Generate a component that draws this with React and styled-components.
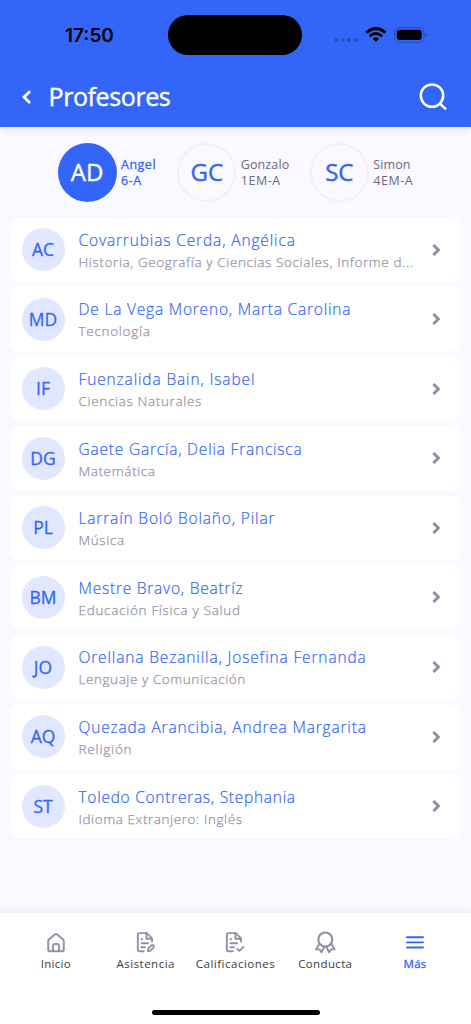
import React from "react";
import styled, { createGlobalStyle } from "styled-components";

const GlobalStyle = createGlobalStyle`
  * {
    box-sizing: border-box;
  }

  body {
    margin: 0;
    background: #faf9ff;
    font-family: "Open Sans", "Noto Sans", sans-serif;
  }
`;

const Screen = styled.div`
  display: flex;
  flex-direction: column;
  width: 471px;
  height: 1024px;
  overflow: hidden;
  background: #faf9ff;
`;

const Header = styled.header`
  flex: none;
  height: 126.5px;
  background: #3366f8;
  box-shadow: 0 2px 8px rgba(60, 50, 110, 0.12);
`;

const StatusBar = styled.div`
  display: flex;
  align-items: center;
  height: 70px;
  padding: 0 42px 0 65px;
`;

const Time = styled.div`
  width: 103px;
  padding-top: 2px;
  font: 600 19px/24px "Inter", sans-serif;
  color: #000;
`;

const Island = styled.div`
  width: 135px;
  height: 40px;
  border-radius: 20px;
  background: #000;
`;

const StatusIcons = styled.svg`
  display: block;
  margin-left: 31px;
`;

const TitleBar = styled.div`
  display: flex;
  align-items: center;
  height: 54px;
  padding: 0 23px 0 21px;
`;

const Title = styled.h1`
  flex: 1;
  margin: -2px 0 0 15.5px;
  font-size: 25px;
  font-weight: 400;
  line-height: 34px;
  letter-spacing: -0.4px;
  -webkit-text-stroke: 0.4px #fff;
  color: #fff;
`;

const Students = styled.div`
  display: flex;
  flex: none;
  height: 91px;
  padding: 15.5px 0 0 57.5px;
`;

const Student = styled.div`
  display: flex;
  align-items: center;
  width: ${({ $width }) => $width}px;
  height: 60px;
`;

const StudentAvatar = styled.div`
  display: flex;
  flex: none;
  align-items: center;
  justify-content: center;
  width: 59px;
  height: 59px;
  padding-bottom: 2px;
  border: 2px solid ${({ $active }) => ($active ? "#3366f8" : "#f1f0f5")};
  border-radius: 50%;
  background: ${({ $active }) => ($active ? "#3366f8" : "transparent")};
  color: ${({ $active }) => ($active ? "#fff" : "#3366f8")};
  font-size: 24px;
  -webkit-text-stroke: 0.4px currentColor;
`;

const StudentInfo = styled.div`
  margin: 2px 0 0 4.5px;
  font-size: 12.5px;
  line-height: 16px;
  letter-spacing: ${({ $active }) => ($active ? 0.5 : 0.1)}px;
  -webkit-text-stroke: ${({ $active }) => ($active ? 0.3 : 0)}px currentColor;
  color: ${({ $active }) => ($active ? "#3366f8" : "#6c6980")};
`;

const Grade = styled.div`
  letter-spacing: 0.5px;
`;

const List = styled.ul`
  display: flex;
  flex: 1;
  flex-direction: column;
  gap: 5.6px;
  margin: 0;
  padding: 0 11px;
  list-style: none;
`;

const Card = styled.li`
  display: flex;
  flex: none;
  align-items: center;
  height: 64px;
  padding: 0 19px 0 10.5px;
  border-radius: 8px;
  background: #fff;
`;

const Avatar = styled.div`
  display: flex;
  flex: none;
  align-items: center;
  justify-content: center;
  width: 43px;
  height: 43px;
  padding-bottom: 1px;
  border-radius: 50%;
  background: #e1e7ff;
  color: #3366f8;
  font-size: 17.5px;
  -webkit-text-stroke: 0.3px currentColor;
`;

const Info = styled.div`
  width: 340px;
  margin-left: 14px;
  padding-top: 2.6px;
  white-space: nowrap;
`;

const Name = styled.div`
  font-size: 15.5px;
  font-weight: 300;
  line-height: 22px;
  letter-spacing: ${({ $ls }) => $ls}px;
  -webkit-text-stroke: 0.2px currentColor;
  color: #3366f8;
`;

const Subject = styled.div`
  font-size: 13.5px;
  font-weight: 300;
  line-height: 22px;
  letter-spacing: ${({ $ls }) => $ls}px;
  -webkit-text-stroke: 0.25px currentColor;
  color: #9593a6;
`;

const Chevron = styled.svg`
  display: block;
  flex: none;
  margin-left: auto;
`;

const Nav = styled.nav`
  display: flex;
  flex: none;
  flex-direction: column;
  align-items: center;
  justify-content: space-between;
  height: 111px;
  padding: 17px 11px 9px;
  background: #fff;
  box-shadow: 0 -2px 10px rgba(60, 50, 110, 0.08);
`;

const Tabs = styled.div`
  display: flex;
  width: 449px;
`;

const Tab = styled.div`
  display: flex;
  flex: 1;
  flex-direction: column;
  align-items: center;
  font-size: 11.5px;
  line-height: 16px;
  letter-spacing: ${({ $ls }) => $ls}px;
  white-space: nowrap;
  -webkit-text-stroke: ${({ $active }) => ($active ? 0.3 : 0)}px currentColor;
  color: ${({ $active }) => ($active ? "#3366f8" : "#3c3c3c")};

  svg {
    display: block;
    color: ${({ $active }) => ($active ? "#3366f8" : "#9390a8")};
  }
`;

const HomeIndicator = styled.div`
  width: 168px;
  height: 5.5px;
  border-radius: 3px;
  background: #000;
`;

const students = [
  { initials: "AD", name: "Angel", grade: "6-A", width: 119.8, active: true },
  { initials: "GC", name: "Gonzalo", grade: "1EM-A", width: 132.5 },
  { initials: "SC", name: "Simon", grade: "4EM-A", width: 110 },
];

const teachers = [
  {
    initials: "AC",
    name: "Covarrubias Cerda, Angélica",
    subject: "Historia, Geografía y Ciencias Sociales, Informe d...",
    nameLs: 0.86,
    subjectLs: 0.61,
  },
  { initials: "MD", name: "De La Vega Moreno, Marta Carolina", subject: "Tecnología", nameLs: 0.8, subjectLs: 0.7 },
  { initials: "IF", name: "Fuenzalida Bain, Isabel", subject: "Ciencias Naturales", nameLs: 0.86, subjectLs: 0.65 },
  { initials: "DG", name: "Gaete García, Delia Francisca", subject: "Matemática", nameLs: 0.79, subjectLs: 0.6 },
  { initials: "PL", name: "Larraín Boló Bolaño, Pilar", subject: "Música", nameLs: 0.84, subjectLs: 0.6 },
  { initials: "BM", name: "Mestre Bravo, Beatríz", subject: "Educación Física y Salud", nameLs: 0.77, subjectLs: 0.7 },
  { initials: "JO", name: "Orellana Bezanilla, Josefina Fernanda", subject: "Lenguaje y Comunicación", nameLs: 0.86, subjectLs: 0.57 },
  { initials: "AQ", name: "Quezada Arancibia, Andrea Margarita", subject: "Religión", nameLs: 0.82, subjectLs: 0.8 },
  { initials: "ST", name: "Toledo Contreras, Stephania", subject: "Idioma Extranjero: Inglés", nameLs: 0.73, subjectLs: 0.58 },
];

const NavIcon = ({ children }) => (
  <svg
    width="26"
    height="26"
    viewBox="0 0 26 26"
    fill="none"
    stroke="currentColor"
    strokeWidth="1.9"
    strokeLinecap="round"
    strokeLinejoin="round"
  >
    {children}
  </svg>
);

const HomeIcon = () => (
  <NavIcon>
    <path d="M5.2 10.8 Q5.2 9.9 6 9.2 L11.7 4.4 Q13 3.4 14.3 4.4 L20 9.2 Q20.8 9.9 20.8 10.8 V19.6 Q20.8 21.3 19.1 21.3 H6.9 Q5.2 21.3 5.2 19.6 Z" />
    <path d="M10 21 V15.8 Q10 14 11.8 14 H14.2 Q16 14 16 15.8 V21" />
  </NavIcon>
);

const DocumentLines = () => (
  <>
    <path d="M10.8 21.3 H6.5 Q4.8 21.3 4.8 19.6 V4.8 Q4.8 3.1 6.5 3.1 H13.8 L19 8.3 V11.5" />
    <path d="M13.4 3.5 V8.7 H18.8" />
    <path d="M8.4 9.2 H9.2 M8.4 13.2 H15 M8.4 17.3 H11.8" />
  </>
);

const AttendanceIcon = () => (
  <NavIcon>
    <DocumentLines />
    <path d="M14.9 21.2 L15.1 18.7 L18.5 15.4 Q19.5 14.7 20.5 15.6 Q21.3 16.5 20.5 17.6 L17.3 20.9 Z" />
  </NavIcon>
);

const GradesIcon = () => (
  <NavIcon>
    <DocumentLines />
    <path d="M15.2 18.9 L17.4 20.9 L21.4 16.9" />
  </NavIcon>
);

const ConductIcon = () => (
  <NavIcon>
    <circle cx="13.3" cy="9.5" r="7" strokeWidth="2.2" />
    <path d="M7 14.2 L4 19.4 L7.4 19.4 L9.5 22.3 L12.2 17" />
    <path d="M19.6 14.2 L22.6 19.4 L19.2 19.4 L17.1 22.3 L14.4 17" />
  </NavIcon>
);

const MenuIcon = () => (
  <NavIcon>
    <path d="M5 7.3 H21 M5 12.4 H21 M5 17.5 H21" />
  </NavIcon>
);

const tabs = [
  { label: "Inicio", Icon: HomeIcon, ls: 0.3 },
  { label: "Asistencia", Icon: AttendanceIcon, ls: 0.5 },
  { label: "Calificaciones", Icon: GradesIcon, ls: 0.5 },
  { label: "Conducta", Icon: ConductIcon, ls: 0.35 },
  { label: "Más", Icon: MenuIcon, ls: 0.3, active: true },
];

const App = () => (
  <>
    <GlobalStyle />
    <Screen>
      <Header>
        <StatusBar>
          <Time>17:50</Time>
          <Island />
          <StatusIcons width="96" height="20" viewBox="0 0 96 20" fill="none">
            <g fill="#2850c6">
              <circle cx="3" cy="15" r="2.1" />
              <circle cx="9.5" cy="15" r="2.1" />
              <circle cx="16" cy="15" r="2.1" />
              <circle cx="22.5" cy="15" r="2.1" />
            </g>
            <g stroke="#000" strokeWidth="2.8">
              <path d="M33.4 7.6 Q43 -0.6 52.6 7.6" />
              <path d="M36.7 11.2 Q43 5.8 49.3 11.2" />
            </g>
            <path d="M39.7 13.6 Q43 10.9 46.3 13.6 L43 17 Z" fill="#000" />
            <rect x="61.8" y="2.6" width="29.4" height="14.6" rx="4.6" stroke="#234bb8" />
            <rect x="64" y="4.8" width="25" height="10.2" rx="3" fill="#000" />
            <path d="M92.7 7.7 Q94.5 8.2 94.5 9.8 Q94.5 11.3 92.7 11.8 Z" fill="#234bb8" />
          </StatusIcons>
        </StatusBar>
        <TitleBar>
          <svg width="12" height="16" viewBox="0 0 12 16" fill="none">
            <path d="M8.2 3 L3 8 L8.2 13.2" stroke="#fff" strokeWidth="2.8" strokeLinecap="round" />
          </svg>
          <Title>Profesores</Title>
          <svg width="30" height="30" viewBox="0 0 30 30" fill="none" stroke="#fff" strokeWidth="2.5" strokeLinecap="round">
            <circle cx="14" cy="13.6" r="11.2" />
            <path d="M22.3 22 L27.3 26.6" />
          </svg>
        </TitleBar>
      </Header>

      <Students>
        {students.map(({ initials, name, grade, width, active }) => (
          <Student key={initials} $width={width}>
            <StudentAvatar $active={active}>{initials}</StudentAvatar>
            <StudentInfo $active={active}>
              <div>{name}</div>
              <Grade>{grade}</Grade>
            </StudentInfo>
          </Student>
        ))}
      </Students>

      <List>
        {teachers.map(({ initials, name, subject, nameLs, subjectLs }) => (
          <Card key={initials}>
            <Avatar>{initials}</Avatar>
            <Info>
              <Name $ls={nameLs}>{name}</Name>
              <Subject $ls={subjectLs}>{subject}</Subject>
            </Info>
            <Chevron width="10" height="14" viewBox="0 0 10 14" fill="none">
              <path d="M2.4 2 L7.4 7 L2.4 12" stroke="#8e8ba3" strokeWidth="2.8" />
            </Chevron>
          </Card>
        ))}
      </List>

      <Nav>
        <Tabs>
          {tabs.map(({ label, Icon, ls, active }) => (
            <Tab key={label} $ls={ls} $active={active}>
              <Icon />
              {label}
            </Tab>
          ))}
        </Tabs>
        <HomeIndicator />
      </Nav>
    </Screen>
  </>
);

export default App;
